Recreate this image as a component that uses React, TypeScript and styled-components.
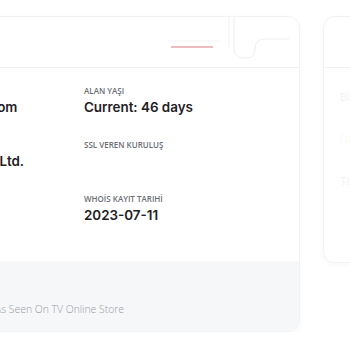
import React from "react";
import styled, { createGlobalStyle } from "styled-components";

const Global = createGlobalStyle`
  html, body { margin: 0; padding: 0; background: #ffffff; }
  body { font-family: Inter, "Noto Sans", sans-serif; overflow: hidden; }
`;

const Strip = styled.div`
  display: flex;
  align-items: flex-start;
  gap: 23px;
  padding-top: 16px;
  margin-left: -200px;
  width: 700px;
`;

const Card = styled.section<{ $w: number; $h?: number }>`
  flex: 0 0 ${(p) => p.$w}px;
  ${(p) => (p.$h ? `height: ${p.$h}px; box-sizing: border-box;` : "")}
  background: #fff;
  border: 1px solid #f1f2f4;
  border-radius: 12px;
  box-shadow: 0 2px 6px rgba(20, 30, 60, 0.03);
  overflow: hidden;
  display: flex;
  flex-direction: column;
`;

const Header = styled.header`
  height: 50px;
  flex: 0 0 50px;
  border-bottom: 1px solid #f1f2f4;
  display: flex;
  align-items: flex-start;
  justify-content: flex-end;
  padding-right: 6px;
`;

const Grid = styled.div`
  display: grid;
  grid-template-columns: 263px 1fr;
  column-gap: 0;
  row-gap: 20px;
  padding: 17px 20px 34px 20px;
`;

const Field = styled.div`
  display: flex;
  flex-direction: column;
  gap: 3px;
  min-height: 34px;
`;

const Label = styled.div`
  font-family: "Open Sans", sans-serif;
  font-size: 8px;
  font-weight: 600;
  color: #6b6e75;
  line-height: 11px;
  text-transform: uppercase;
`;

const Value = styled.div`
  font-family: Inter, sans-serif;
  font-size: 13.4px;
  font-weight: 600;
  color: #1f2124;
  line-height: 17px;
  white-space: nowrap;
`;

const Indent = styled.div`
  padding-left: 89px;
`;

const Footer = styled.footer`
  background: #f6f7f9;
  height: 70px;
  display: flex;
  align-items: flex-end;
  padding: 0 0 15px 20px;
  box-sizing: border-box;
`;

const FooterText = styled.div`
  font-family: "Open Sans", sans-serif;
  font-size: 10.4px;
  font-weight: 300;
  color: #9a9ca2;
  width: 303px;
  text-align: right;
  white-space: nowrap;
`;

const SideBody = styled.div`
  display: flex;
  flex-direction: column;
  gap: 28px;
  padding: 22px 16px 30px;
  opacity: 0.05;
`;

const SideLine = styled.div<{ $c?: string }>`
  font-family: Inter, sans-serif;
  font-size: 11px;
  color: ${(p) => p.$c || "#333"};
`;

const Deco = () => (
  <svg width="130" height="50" viewBox="0 0 130 50" fill="none">
    <line x1="8" y1="30" x2="50" y2="30" stroke="#e9a4ab" strokeWidth="1.3" />
    <line x1="5" y1="24" x2="58" y2="24" stroke="#f3f4f6" strokeWidth="1" />
    <line x1="66" y1="0" x2="66" y2="30" stroke="#eef0f2" strokeWidth="1" />
    <path d="M71 0 V31 Q71 41 81 41 H84 Q92 41 92 32 Q92 22 102 22 H126" stroke="#eceef0" strokeWidth="1" />
  </svg>
);

export default function App() {
  return (
    <>
      <Global />
      <Strip>
        <Card $w={498}>
          <Header>
            <Deco />
          </Header>
          <Grid>
            <Indent>
              <Field>
                <Label>Alan Adı</Label>
                <Value>asseenontv.com</Value>
              </Field>
            </Indent>
            <Field>
              <Label>Alan Yaşı</Label>
              <Value>Current: 46 days</Value>
            </Field>
            <Indent>
              <Field>
                <Label>SSL</Label>
                <Value>Sectigo Trust Ltd.</Value>
              </Field>
            </Indent>
            <Field>
              <Label>SSL Veren Kuruluş</Label>
              <Value />
            </Field>
            <Indent>
              <Field>
                <Label>IP</Label>
                <Value />
              </Field>
            </Indent>
            <Field>
              <Label>WHOİS Kayıt Tarihİ</Label>
              <Value>2023-07-11</Value>
            </Field>
          </Grid>
          <Footer>
            <FooterText>As Seen On TV Online Store</FooterText>
          </Footer>
        </Card>
        <Card $w={200} $h={247}>
          <Header />
          <SideBody>
            <SideLine>Bilgi</SideLine>
            <SideLine $c="#c9a400">Durum</SideLine>
            <SideLine>Tarih</SideLine>
          </SideBody>
        </Card>
      </Strip>
    </>
  );
}
